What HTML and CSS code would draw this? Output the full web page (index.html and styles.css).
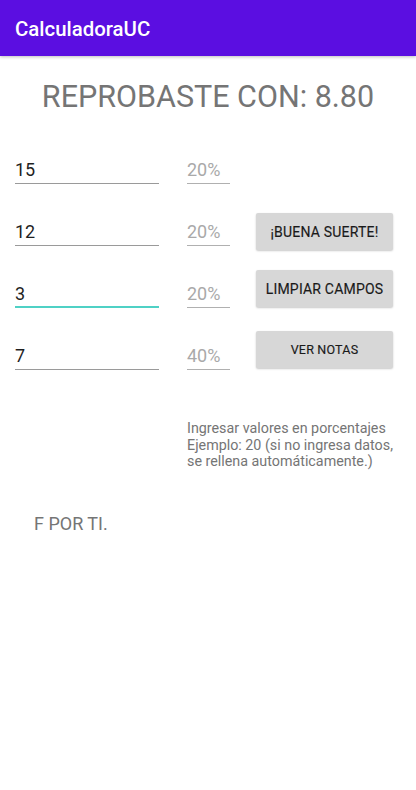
FILE: index.html
```html
<!DOCTYPE html>
<html lang="es">
<head>
<meta charset="utf-8">
<title>CalculadoraUC</title>
<link rel="stylesheet" href="styles.css">
</head>
<body>
<header class="appbar">
  <div class="appbar-title">CalculadoraUC</div>
</header>
<main class="content">
  <h1 class="result">REPROBASTE CON: 8.80</h1>
  <section class="form">
    <div class="rows">
      <div class="row">
        <div class="field grade">15</div>
        <div class="field pct">20%</div>
      </div>
      <div class="row">
        <div class="field grade">12</div>
        <div class="field pct">20%</div>
      </div>
      <div class="row">
        <div class="field grade focused">3</div>
        <div class="field pct">20%</div>
      </div>
      <div class="row">
        <div class="field grade">7</div>
        <div class="field pct">40%</div>
      </div>
    </div>
    <div class="buttons">
      <div class="btn btn-1">¡BUENA SUERTE!</div>
      <div class="btn btn-2">LIMPIAR CAMPOS</div>
      <div class="btn btn-3">VER NOTAS</div>
    </div>
  </section>
  <p class="hint">Ingresar valores en porcentajes<br>Ejemplo: 20 (si no ingresa datos,<br>se rellena automáticamente.)</p>
  <p class="verdict">F POR TI.</p>
</main>
</body>
</html>
```
FILE: styles.css
```css
html, body {
  margin: 0;
  padding: 0;
  background: #ffffff;
}
body {
  width: 416px;
  height: 790px;
  font-family: Roboto, "Noto Sans", "Liberation Sans", sans-serif;
  overflow: hidden;
}
.appbar {
  height: 56px;
  background: #5b0ee1;
  box-shadow: 0 1px 3px rgba(0, 0, 0, 0.25);
  box-sizing: border-box;
  padding: 17px 0 0 15px;
}
.appbar-title {
  color: #ffffff;
  font-size: 20.4px;
  font-weight: 500;
  line-height: 24px;
}
.content {
  display: flex;
  flex-direction: column;
}
.result {
  margin: 23px 0 0 0;
  text-align: center;
  font-size: 30.5px;
  line-height: 36px;
  font-weight: 400;
  color: #757575;
}
.form {
  display: flex;
  margin-top: 44px;
  padding-left: 15px;
}
.rows {
  display: flex;
  flex-direction: column;
  gap: 37px;
}
.row {
  display: flex;
  gap: 28px;
}
.field {
  font-size: 18px;
  line-height: 21px;
  padding-bottom: 3px;
  border-bottom: 1px solid #9a9a9a;
}
.grade {
  width: 144px;
  color: #1f1f1f;
}
.grade.focused {
  padding-bottom: 2px;
  border-bottom: 2px solid #4fd1c5;
}
.pct {
  width: 43px;
  color: #a9a9a9;
  border-bottom-color: #b0b0b0;
}
.buttons {
  display: flex;
  flex-direction: column;
  margin-left: 26px;
  padding-top: 54px;
}
.btn {
  width: 137px;
  height: 37px;
  box-sizing: border-box;
  background: #d7d7d7;
  border-radius: 2px;
  box-shadow: 0 1px 2px rgba(0, 0, 0, 0.22);
  font-size: 14px;
  font-weight: 400;
  letter-spacing: 0.2px;
  -webkit-text-stroke: 0.15px #1a1a1a;
  color: #1a1a1a;
  display: flex;
  align-items: center;
  justify-content: center;
}
.btn-2 {
  margin-top: 20px;
}
.btn-3 {
  margin-top: 24px;
  font-size: 12.5px;
}
.hint {
  margin: 50px 0 0 187px;
  font-size: 14.3px;
  line-height: 16.5px;
  color: #757575;
}
.verdict {
  margin: 43px 0 0 34px;
  font-size: 18px;
  line-height: 21px;
  color: #757575;
}
```
